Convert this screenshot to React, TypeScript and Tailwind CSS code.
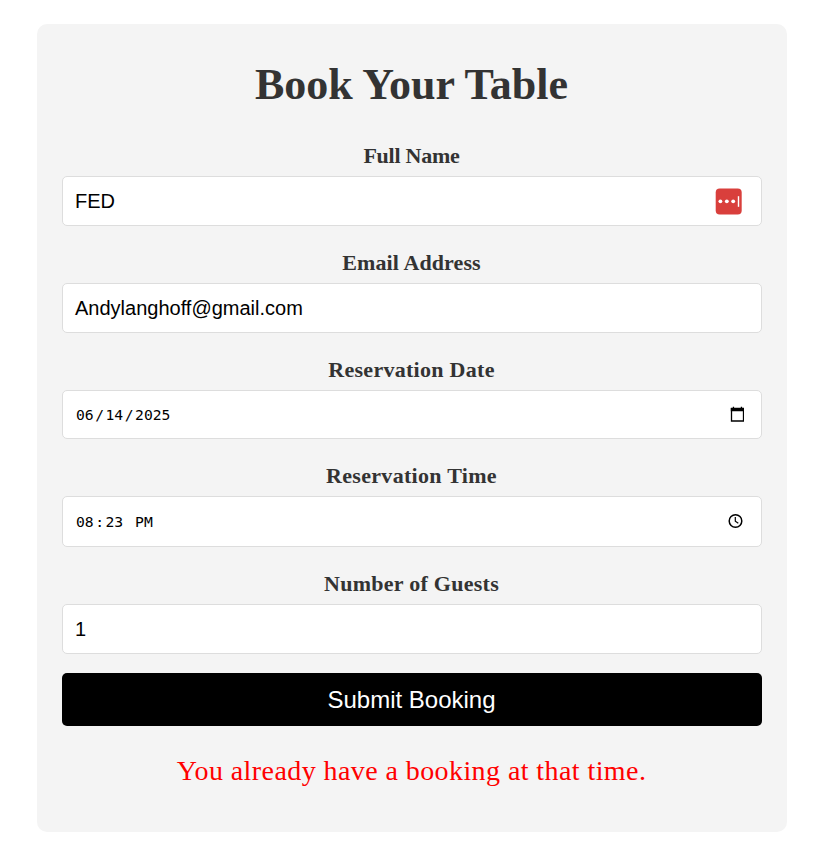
import type { ReactNode } from "react";

const serif = "font-['Liberation_Serif',serif]";

function Field({ label, spacing, height, gap, children }: { label: string; spacing: string; height: string; gap: string; children: ReactNode }) {
  return (
    <div className={gap}>
      <div className={`mb-[5px] h-[30px] pr-[1px] text-center text-[22px] leading-[30px] font-bold whitespace-nowrap text-[#333] ${serif} ${spacing}`}>{label}</div>
      <div className={`flex items-center justify-between rounded-[5px] border border-[#ddd] bg-white px-3 text-[20px] text-black ${height}`}>{children}</div>
    </div>
  );
}

function Segments({ parts, separators }: { parts: string[]; separators: string[] }) {
  return (
    <span className="flex pt-[2px] font-['DejaVu_Sans_Mono',monospace] text-[14.7px] whitespace-pre">
      {parts.map((part, i) => (
        <span key={i} className="flex">
          <span className="px-[1px]">{part}</span>
          {separators[i] && <span className="px-[0.5px]">{separators[i]}</span>}
        </span>
      ))}
    </span>
  );
}

export default function App() {
  return (
    <main className="min-h-[850px] bg-white pt-6 pl-[37px] font-['Liberation_Sans',Arial,sans-serif]">
      <form className="h-[808px] w-[750px] rounded-[10px] bg-[#f4f4f4] px-[25px] pt-[31px]">
        <h1 className={`h-[86px] pr-[1px] text-center text-[44px] leading-[60px] font-bold text-[#333] ${serif}`}>Book Your Table</h1>
        <Field label="Full Name" spacing="tracking-[-0.25px]" height="h-[50px]" gap="mb-[22px]">
          <span>FED</span>
          <svg width="27" height="27" viewBox="0 0 27 27" className="mr-[7px]">
            <rect x="0.7" y="0.5" width="26" height="26" rx="4" fill="#d93f3c" />
            <g fill="white">
              <circle cx="5.4" cy="13.3" r="1.9" />
              <circle cx="11.8" cy="13.3" r="1.9" />
              <circle cx="18.2" cy="13.3" r="1.9" />
              <rect x="22.8" y="8.2" width="1.4" height="10.6" />
            </g>
          </svg>
        </Field>
        <Field label="Email Address" spacing="tracking-[0.1px]" height="h-[50px]" gap="mb-[22px]">
          <span>Andylanghoff@gmail.com</span>
        </Field>
        <Field label="Reservation Date" spacing="tracking-[0.28px]" height="h-[49px]" gap="mb-[22px]">
          <Segments parts={["06", "14", "2025"]} separators={["/", "/"]} />
          <svg width="14" height="16" viewBox="0 0 14 16" className="mr-[5px] mb-[2px]">
            <path d="M1.5 2.5h12V15h-12z" fill="none" stroke="black" strokeWidth="1.3" />
            <path d="M0.8 2h13.2v3.2H0.8zM2.8 0.7h1.3V2H2.8zM10.8 0.7h1.3V2h-1.3z" fill="black" />
          </svg>
        </Field>
        <Field label="Reservation Time" spacing="tracking-[0.3px]" height="h-[51px]" gap="mb-[22px]">
          <Segments parts={["08", "23", "PM"]} separators={[":", " "]} />
          <svg width="16" height="16" viewBox="0 0 16 16" className="mr-[5px] mb-[1px]" fill="none" stroke="black">
            <circle cx="7.5" cy="8" r="6.3" strokeWidth="1.5" />
            <path d="M7.3 4v4.3l3 2" strokeWidth="1.2" />
          </svg>
        </Field>
        <Field label="Number of Guests" spacing="tracking-[0.27px]" height="h-[50px]" gap="mb-[19px]">
          <span>1</span>
        </Field>
        <button type="button" className="block h-[53px] w-full rounded-[5px] bg-black pr-[1px] text-center text-[24px] text-white">Submit Booking</button>
        <p className={`mt-[25px] pr-[1px] text-center text-[28px] leading-[40px] tracking-[0.42px] whitespace-nowrap text-[#f00] ${serif}`}>You already have a booking at that time.</p>
      </form>
    </main>
  );
}
